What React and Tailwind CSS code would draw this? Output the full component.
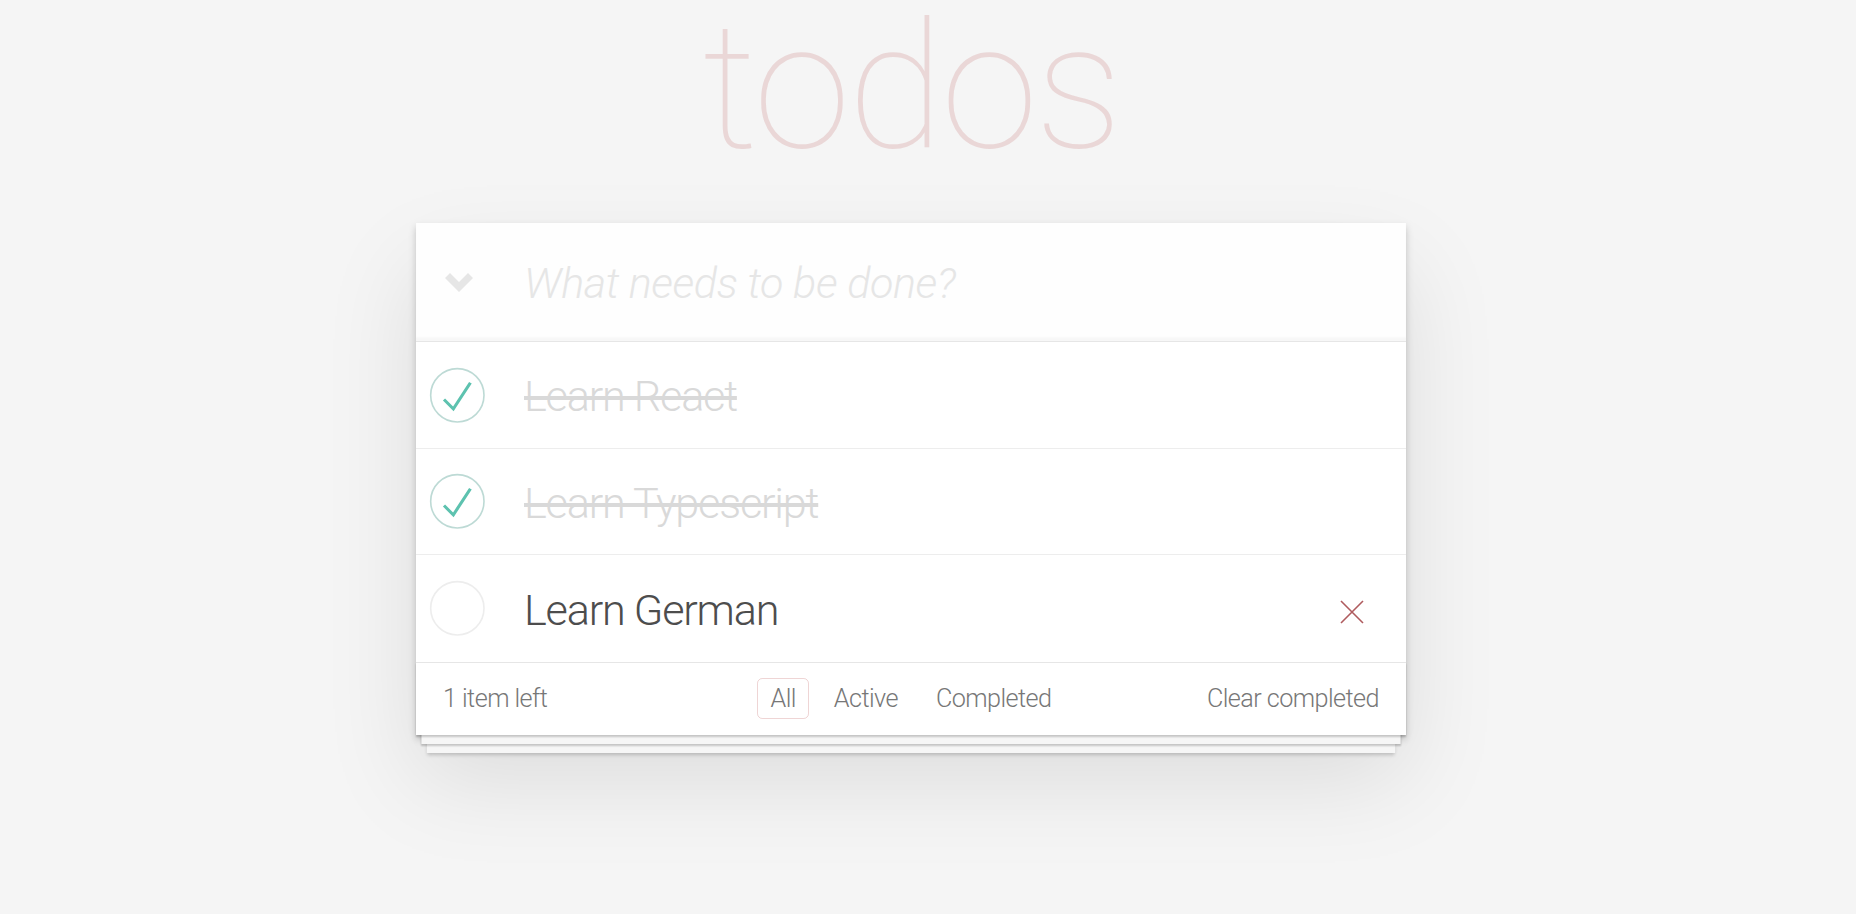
import { useState } from 'react';

const initialTodos = [
  { id: 1, title: 'Learn React', completed: true },
  { id: 2, title: 'Learn Typescript', completed: true },
  { id: 3, title: 'Learn German', completed: false },
];

const filters = ['All', 'Active', 'Completed'];

function Toggle({ checked }) {
  return (
    <svg width="72" height="72" viewBox="-10 -18 100 135" className="shrink-0">
      <circle cx="50" cy="50" r="50" fill="none" stroke={checked ? '#bddad5' : '#ededed'} strokeWidth="3" />
      {checked && <path fill="#5dc2af" d="M72 25L42 71 27 56l-4 4 20 20 34-52z" />}
    </svg>
  );
}

function TodoItem({ todo, last, hovered }) {
  return (
    <li className={`flex items-center h-[106.6px] ${last ? '' : 'border-b border-[#ededed]'}`}>
      <Toggle checked={todo.completed} />
      <label
        className={`flex-1 ml-[36px] mt-[5px] text-[43.2px] leading-[1.2] tracking-[-0.028em] ${
          todo.completed ? 'text-[#d9d9d9] line-through' : 'text-[#4d4d4d]'
        }`}
      >
        {todo.title}
      </label>
      {hovered && (
        <button className="w-[72px] h-[72px] mr-[18px] mt-[7px] flex items-center justify-center">
          <svg width="24" height="24" viewBox="0 0 24 24">
            <path d="M1 1L23 23M23 1L1 23" stroke="#af5b5e" strokeWidth="1.6" />
          </svg>
        </button>
      )}
    </li>
  );
}

export default function App() {
  const [todos] = useState(initialTodos);
  const left = todos.filter((t) => !t.completed).length;

  return (
    <div className="min-h-screen bg-[#f5f5f5] font-['Roboto','Helvetica_Neue',Arial,sans-serif] font-light text-[#4d4d4d]">
      <div className="w-[1822px] pb-[72px]">
        <div className="w-[990px] mx-auto">
          <h1 className="-mt-[1px] h-[176px] leading-[176px] text-center text-[176px] font-thin tracking-[-0.016em] text-[rgba(175,47,47,0.15)]">
            todos
          </h1>

          <section className="mt-[48px] bg-white shadow-[0_3.6px_7.2px_0_rgba(0,0,0,0.2),0_45px_90px_0_rgba(0,0,0,0.1)]">
            <header className="flex items-center h-[118px] bg-[rgba(0,0,0,0.003)] shadow-[inset_0_-3.6px_1.8px_rgba(0,0,0,0.03)]">
              <div className="w-[108px] shrink-0 flex items-center">
                <svg width="28" height="19" viewBox="0 0 28 19" className="ml-[29px]">
                  <path d="M0 5L5 0L14 9L23 0L28 5L14 19Z" fill="#e6e6e6" />
                </svg>
              </div>
              <input
                className="flex-1 h-full pt-[2px] pr-[28.8px] bg-transparent outline-none text-[43.2px] font-light tracking-[-0.01em] placeholder:italic placeholder:font-light placeholder:text-[#e6e6e6]"
                placeholder="What needs to be done?"
              />
            </header>

            <ul className="border-t border-[#e6e6e6]">
              {todos.map((todo, i) => (
                <TodoItem key={todo.id} todo={todo} last={i === todos.length - 1} hovered={i === 2} />
              ))}
            </ul>

            <footer className="grid grid-cols-[1fr_auto_1fr] items-center h-[73px] px-[27px] border-t border-[#e6e6e6] text-[25.2px] leading-[35px] tracking-[-0.022em] text-[#777] shadow-[0_1.8px_1.8px_rgba(0,0,0,0.2),0_14.4px_0_-5.4px_#f6f6f6,0_16.2px_1.8px_-5.4px_rgba(0,0,0,0.2),0_28.8px_0_-10.8px_#f6f6f6,0_30.6px_3.6px_-10.8px_rgba(0,0,0,0.2)]">
              <span className="text-left">
                {left} item left
              </span>
              <ul className="flex">
                {filters.map((f) => (
                  <li key={f}>
                    <a
                      className={`block mx-[5.4px] px-[12.6px] py-[2px] border rounded-[5.4px] ${
                        f === 'All' ? 'border-[rgba(175,47,47,0.2)]' : 'border-transparent'
                      }`}
                    >
                      {f}
                    </a>
                  </li>
                ))}
              </ul>
              <button className="justify-self-end tracking-[-0.022em]">Clear completed</button>
            </footer>
          </section>
        </div>
      </div>
    </div>
  );
}
